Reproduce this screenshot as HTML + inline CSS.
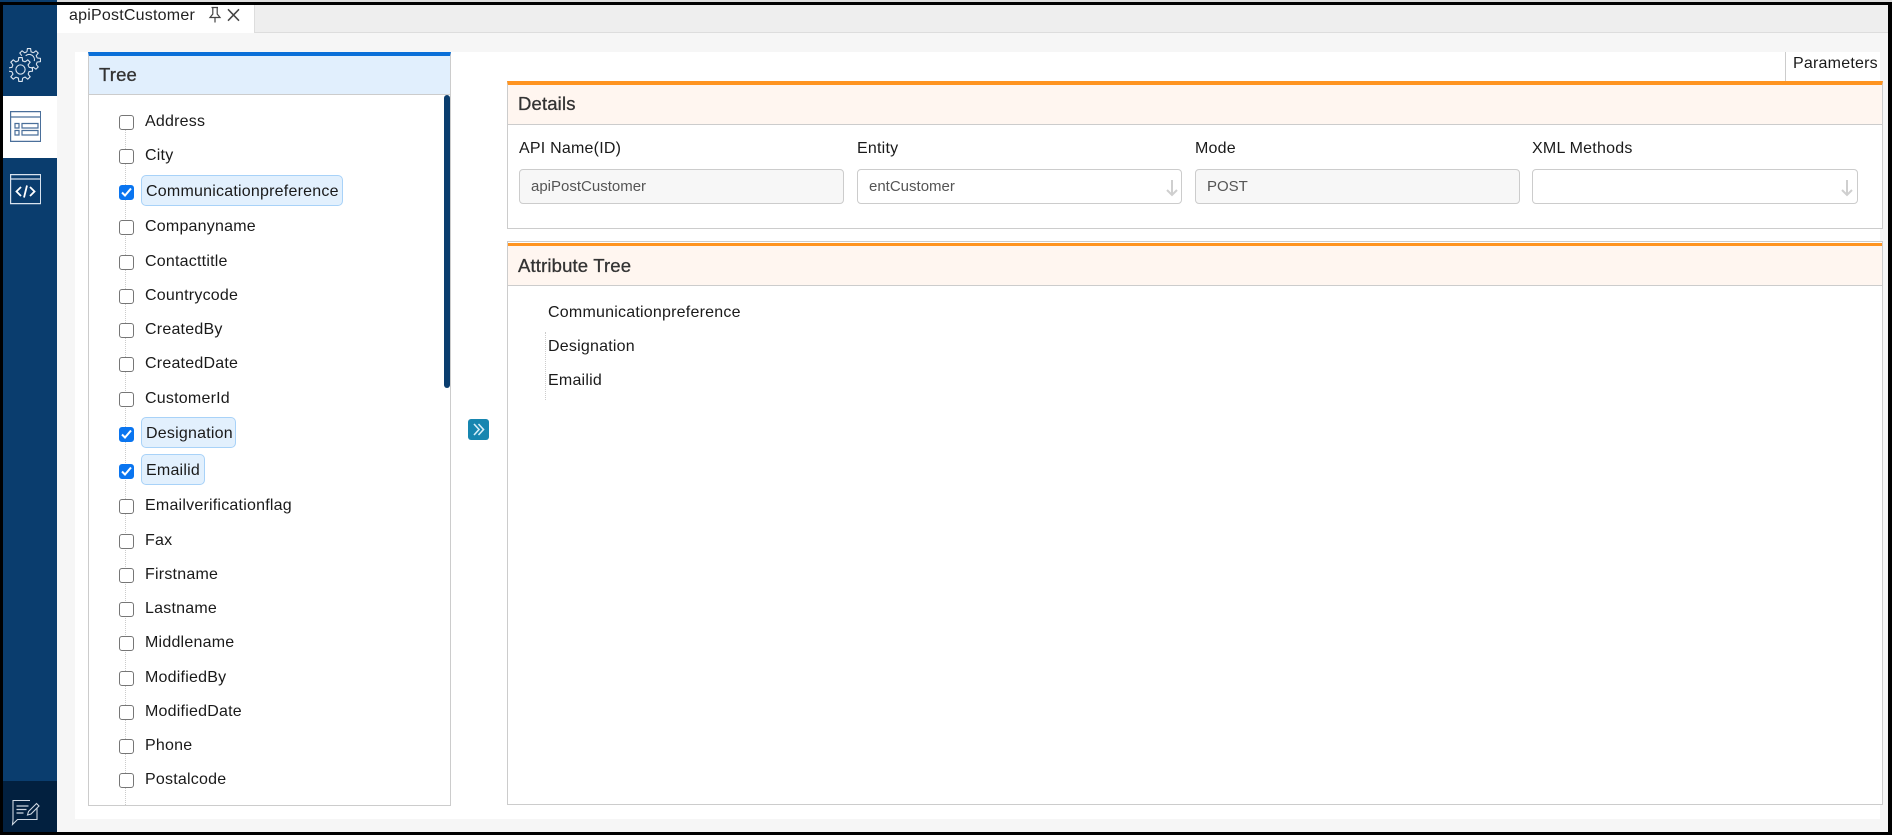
<!DOCTYPE html>
<html lang="en"><head><meta charset="utf-8"><title>apiPostCustomer</title>
<style>
html,body{margin:0;padding:0;width:1892px;height:835px;overflow:hidden;background:#000}
body{position:relative;font-family:"Liberation Sans",sans-serif;color:#1a1a1a;font-size:16px}
div,span,svg{position:absolute;box-sizing:border-box}
.t{white-space:nowrap;line-height:18px;height:18px;letter-spacing:.22px;margin-top:2px}
.h{font-size:18.5px;line-height:20px;height:20px;color:#333;white-space:nowrap;letter-spacing:.15px;-webkit-text-stroke:.3px #333}
.cb{left:119px;width:15px;height:15px;border:1.5px solid #767676;border-radius:3px;background:#fff}
.cb.on{background:#0a75f0;border-color:#0a75f0}
.sel{left:141px;height:31px;background:#e2f0fd;border:1px solid #a8d2f8;border-radius:5px}
.in{top:169px;height:35px;border:1px solid #ccc;border-radius:4px;background:#fff;color:#555;line-height:34px;padding-left:11px;font-size:15px}
.in.g{background:#f7f7f7}
.ar{top:179px;width:14px;height:18px}
</style></head><body>
<div style="left:0;top:0;width:57px;height:2px;background:#0a3d6e"></div>
<div style="left:57px;top:0;width:1835px;height:2px;background:#ddd"></div>
<div style="left:3px;top:5px;width:54px;height:827px;background:#0a3d6e"></div>
<div style="left:3px;top:96px;width:54px;height:62px;background:#fff"></div>
<div style="left:3px;top:781px;width:54px;height:51px;background:#02203f"></div>
<div style="left:57px;top:5px;width:1831px;height:827px;background:#f6f6f6"></div>
<div style="left:57px;top:5px;width:1831px;height:28px;background:#eee;border-bottom:1px solid #ddd"></div>
<div style="left:57px;top:5px;width:198px;height:28px;background:#fff;border-right:1px solid #ddd"></div>
<div class="t" style="left:69px;top:5px;color:#222">apiPostCustomer</div>
<svg style="left:208px;top:6px" width="34" height="18" viewBox="0 0 34 18" fill="none" stroke="#444" stroke-width="1.2"><path d="M3.500 1.500h6.500M4.800 1.500v6.500L2 11.500h10L9.200 8V1.500M7 11.500v5"/><path d="M20 3.300l11 11.400M31 3.300L20 14.700" stroke-width="1.500"/></svg>
<svg style="left:9px;top:47px" width="34" height="36" viewBox="0 0 34 36" fill="none" stroke="#dfe7f0" stroke-width="1">
<g transform="translate(11.500 22.500) scale(1.100)"><circle r="4.200"/>
<path d="M7.760-1.940L10.890-1.530V1.530L7.760 1.940A8 8 0 0 1 6.860 4.120"/>
<path d="M7.760-1.940L10.890-1.530V1.530L7.760 1.940A8 8 0 0 1 6.860 4.120" transform="rotate(45)"/>
<path d="M7.760-1.940L10.890-1.530V1.530L7.760 1.940A8 8 0 0 1 6.860 4.120" transform="rotate(90)"/>
<path d="M7.760-1.940L10.890-1.530V1.530L7.760 1.940A8 8 0 0 1 6.860 4.120" transform="rotate(135)"/>
<path d="M7.760-1.940L10.890-1.530V1.530L7.760 1.940A8 8 0 0 1 6.860 4.120" transform="rotate(180)"/>
<path d="M7.760-1.940L10.890-1.530V1.530L7.760 1.940A8 8 0 0 1 6.860 4.120" transform="rotate(225)"/>
<path d="M7.760-1.940L10.890-1.530V1.530L7.760 1.940A8 8 0 0 1 6.860 4.120" transform="rotate(270)"/>
<path d="M7.760-1.940L10.890-1.530V1.530L7.760 1.940A8 8 0 0 1 6.860 4.120" transform="rotate(315)"/></g>
<g transform="translate(20 13) scale(1.050)"><path d="M-3.200-4A5 5 0 0 1 5 1"/>
<path d="M7.760-1.940L10.890-1.530V1.530L7.760 1.940A8 8 0 0 1 6.860 4.120" transform="rotate(-135)"/>
<path d="M7.760-1.940L10.890-1.530V1.530L7.760 1.940A8 8 0 0 1 6.860 4.120" transform="rotate(-90)"/>
<path d="M7.760-1.940L10.890-1.530V1.530L7.760 1.940A8 8 0 0 1 6.860 4.120" transform="rotate(-45)"/>
<path d="M7.760-1.940L10.890-1.530V1.530L7.760 1.940A8 8 0 0 1 6.860 4.120"/>
<path d="M7.760-1.940L10.890-1.530V1.530L7.760 1.940A8 8 0 0 1 6.860 4.120" transform="rotate(45)"/></g>
</svg>
<svg style="left:10px;top:111px" width="31" height="31" viewBox="0 0 31 31" fill="none" stroke="#4a6f9a" stroke-width="1.200"><path d="M.6.600h30v29.800h-30zM.6 6h30"/><path d="M5 12.500h4v4.500H5zM5 19.500h4v4.500H5zM12 12.500h16v4.500H12zM12 19.500h16v4.500H12z"/></svg>
<svg style="left:10px;top:174px" width="31" height="31" viewBox="0 0 31 31" fill="none" stroke="#d9e3ee" stroke-width="1.200"><path d="M.6.600h30v29h-30zM.6 5h30"/><path d="M11 13l-4.500 4.500 4.500 4.500M20 13l4.500 4.500-4.500 4.500M17 11.500l-3 12" stroke="#fff" stroke-width="1.800"/></svg>
<svg style="left:10px;top:797px" width="32" height="30" viewBox="0 0 32 30" fill="none" stroke="#cfd8e2" stroke-width="1.100"><path d="M20 3.500H3v19.500l-.5 4.500 5-5H27V10"/><path d="M6.500 9h12M6.500 12.500h10M6.500 16h7" stroke-width="1.300"/><path d="M17.500 18l1-3.500 8-8 2.500 2.500-8 8z" fill="#02203f"/></svg>
<div style="left:75px;top:52px;width:1805px;height:767px;background:#fff"></div>

<div style="left:88px;top:52px;width:363px;height:754px;border:1px solid #ccc;background:#fff"></div>
<div style="left:88px;top:52px;width:363px;height:43px;background:#e1effd;border:1px solid #ccc;border-top:4px solid #0a6fd8"></div>
<div class="h" style="left:99px;top:65px">Tree</div>
<div style="left:444px;top:95px;width:6px;height:293px;background:#0a3d6e;border-radius:3px"></div>
<div style="left:125px;top:130px;width:0;height:675px;border-left:1px dotted #ccc"></div>

<div class="sel" style="top:175px;width:202px"></div>
<div class="sel" style="top:417px;width:95px"></div>
<div class="sel" style="top:454px;width:64px"></div>

<div class="cb" style="top:115px"></div><div class="t" style="left:145px;top:111px">Address</div>
<div class="cb" style="top:149px"></div><div class="t" style="left:145px;top:145px">City</div>
<div class="cb on" style="top:185px"><svg style="left:1px;top:1px" width="11" height="11" viewBox="0 0 11 11" fill="none" stroke="#fff" stroke-width="2"><path d="M1 5.500l3 3 6-7"/></svg></div><div class="t" style="left:146px;top:181px">Communicationpreference</div>
<div class="cb" style="top:220px"></div><div class="t" style="left:145px;top:216px">Companyname</div>
<div class="cb" style="top:255px"></div><div class="t" style="left:145px;top:251px">Contacttitle</div>
<div class="cb" style="top:289px"></div><div class="t" style="left:145px;top:285px">Countrycode</div>
<div class="cb" style="top:323px"></div><div class="t" style="left:145px;top:319px">CreatedBy</div>
<div class="cb" style="top:357px"></div><div class="t" style="left:145px;top:353px">CreatedDate</div>
<div class="cb" style="top:392px"></div><div class="t" style="left:145px;top:388px">CustomerId</div>
<div class="cb on" style="top:427px"><svg style="left:1px;top:1px" width="11" height="11" viewBox="0 0 11 11" fill="none" stroke="#fff" stroke-width="2"><path d="M1 5.500l3 3 6-7"/></svg></div><div class="t" style="left:146px;top:423px">Designation</div>
<div class="cb on" style="top:464px"><svg style="left:1px;top:1px" width="11" height="11" viewBox="0 0 11 11" fill="none" stroke="#fff" stroke-width="2"><path d="M1 5.500l3 3 6-7"/></svg></div><div class="t" style="left:146px;top:460px">Emailid</div>
<div class="cb" style="top:499px"></div><div class="t" style="left:145px;top:495px">Emailverificationflag</div>
<div class="cb" style="top:534px"></div><div class="t" style="left:145px;top:530px">Fax</div>
<div class="cb" style="top:568px"></div><div class="t" style="left:145px;top:564px">Firstname</div>
<div class="cb" style="top:602px"></div><div class="t" style="left:145px;top:598px">Lastname</div>
<div class="cb" style="top:636px"></div><div class="t" style="left:145px;top:632px">Middlename</div>
<div class="cb" style="top:671px"></div><div class="t" style="left:145px;top:667px">ModifiedBy</div>
<div class="cb" style="top:705px"></div><div class="t" style="left:145px;top:701px">ModifiedDate</div>
<div class="cb" style="top:739px"></div><div class="t" style="left:145px;top:735px">Phone</div>
<div class="cb" style="top:773px"></div><div class="t" style="left:145px;top:769px">Postalcode</div>

<div style="left:468px;top:419px;width:21px;height:21px;background:#1786b0;border-radius:3px"></div>
<svg style="left:468px;top:419px" width="21" height="21" viewBox="0 0 21 21" fill="none" stroke="#d5eef8" stroke-width="1.600"><path d="M6 5l5 5.500-5 5.500M10.500 5l5 5.500-5 5.500"/></svg>

<div style="left:1785px;top:52px;width:1px;height:29px;background:#ccc"></div>
<div class="t" style="left:1793px;top:53px">Parameters</div>

<div style="left:507px;top:81px;width:1376px;height:148px;border:1px solid #ccc;background:#fff"></div>
<div style="left:507px;top:81px;width:1376px;height:44px;background:#fff6f0;border:1px solid #ccc;border-top:4px solid #ff9420"></div>
<div class="h" style="left:518px;top:94px">Details</div>
<div class="t" style="left:519px;top:138px">API Name(ID)</div>
<div class="t" style="left:857px;top:138px">Entity</div>
<div class="t" style="left:1195px;top:138px">Mode</div>
<div class="t" style="left:1532px;top:138px">XML Methods</div>
<div class="in g" style="left:519px;width:325px">apiPostCustomer</div>
<div class="in" style="left:857px;width:325px">entCustomer</div>
<svg class="ar" style="left:1165px" viewBox="0 0 14 18" fill="none" stroke="#cfcfcf" stroke-width="2"><path d="M7 1v15M2 11l5 5 5-5"/></svg>
<div class="in g" style="left:1195px;width:325px">POST</div>
<div class="in" style="left:1532px;width:326px"></div>
<svg class="ar" style="left:1840px" viewBox="0 0 14 18" fill="none" stroke="#cfcfcf" stroke-width="2"><path d="M7 1v15M2 11l5 5 5-5"/></svg>

<div style="left:507px;top:241px;width:1376px;height:564px;border:1px solid #ccc;background:#fff"></div>
<div style="left:508px;top:243px;width:1374px;height:43px;background:#fff6f0;border-bottom:1px solid #ccc;border-top:3px solid #ff9420"></div>
<div class="h" style="left:518px;top:256px">Attribute Tree</div>
<div style="left:545px;top:332px;width:0;height:68px;border-left:1px dotted #ccc"></div>
<div class="t" style="left:548px;top:302px">Communicationpreference</div>
<div class="t" style="left:548px;top:336px">Designation</div>
<div class="t" style="left:548px;top:370px">Emailid</div>
</body></html>
